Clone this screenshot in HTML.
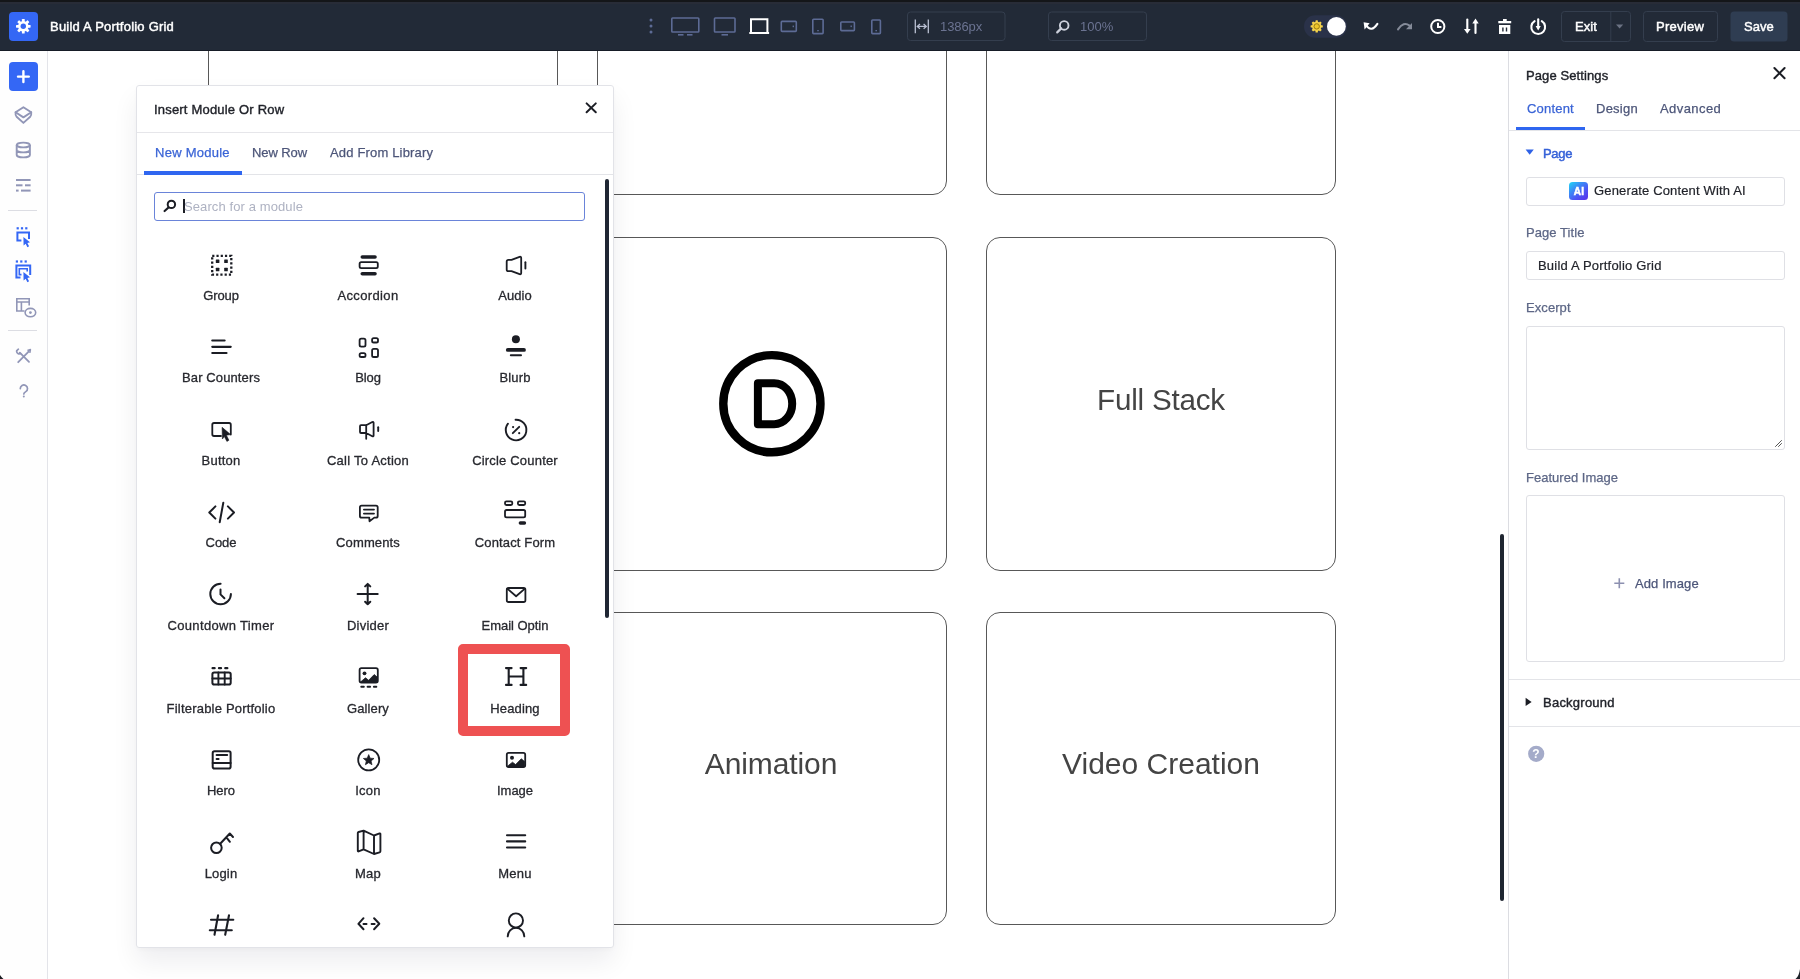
<!DOCTYPE html>
<html><head><meta charset="utf-8">
<style>
*{box-sizing:border-box;margin:0;padding:0}
html,body{width:1800px;height:979px;overflow:hidden;background:#fff;font-family:"Liberation Sans",sans-serif;position:relative}
.abs{position:absolute}
svg{position:absolute;overflow:visible}
.txt{position:absolute;white-space:nowrap;line-height:1;will-change:transform}
</style></head>
<body>
<div class="abs" style="left:208px;top:-30px;width:350px;height:225px;border:1px solid #585858;border-radius:14px;"></div>
<div class="abs" style="left:597px;top:-30px;width:350px;height:225px;border:1px solid #585858;border-radius:14px;"></div>
<div class="abs" style="left:986px;top:-30px;width:350px;height:225px;border:1px solid #585858;border-radius:14px;"></div>
<div class="abs" style="left:208px;top:237px;width:350px;height:334px;border:1px solid #585858;border-radius:14px;"></div>
<div class="abs" style="left:597px;top:237px;width:350px;height:334px;border:1px solid #585858;border-radius:14px;"></div>
<div class="abs" style="left:986px;top:237px;width:350px;height:334px;border:1px solid #585858;border-radius:14px;"></div>
<div class="abs" style="left:208px;top:612px;width:350px;height:313px;border:1px solid #585858;border-radius:14px;"></div>
<div class="abs" style="left:597px;top:612px;width:350px;height:313px;border:1px solid #585858;border-radius:14px;"></div>
<div class="abs" style="left:986px;top:612px;width:350px;height:313px;border:1px solid #585858;border-radius:14px;"></div>
<svg style="left:0;top:0" width="1500" height="979" viewBox="0 0 1500 979"><circle cx="771.9" cy="403.7" r="48.6" fill="none" stroke="#000" stroke-width="8.4"/><path d="M757.9,383.2 H774.2 A18,20.5 0 0 1 774.2,424.2 H757.9 Z" fill="none" stroke="#000" stroke-width="8" stroke-linejoin="round"/><rect x="1500" y="534" width="4" height="367" rx="2" fill="#1f2631"/></svg>
<div class="txt" style="left:1010.80px;width:300px;text-align:center;top:384.54px;font-size:29.6px;font-weight:400;color:#444444;letter-spacing:-0.2px;">Full Stack</div>
<div class="txt" style="left:621.20px;width:300px;text-align:center;top:748.90px;font-size:30px;font-weight:400;color:#444444;letter-spacing:-0.1px;">Animation</div>
<div class="txt" style="left:1010.50px;width:300px;text-align:center;top:748.90px;font-size:30px;font-weight:400;color:#444444;">Video Creation</div>
<div class="abs" style="left:136px;top:85px;width:478px;height:863px;background:#fff;border:1px solid #e2e3e8;border-radius:3px;box-shadow:0 14px 26px rgba(20,20,40,0.07),0 2px 6px rgba(20,20,40,0.03)"></div>
<div class="txt" style="left:154.00px;top:103.00px;font-size:13px;font-weight:400;color:#1f2128;letter-spacing:0.19px;-webkit-text-stroke:0.4px #1f2128;">Insert Module Or Row</div>
<div class="abs" style="left:137px;top:131.5px;width:476px;height:1.0px;background:#e6e6ea;"></div>
<div class="txt" style="left:155.20px;top:146.20px;font-size:13px;font-weight:400;color:#3a64d6;letter-spacing:0.26px;-webkit-text-stroke:0.25px #3a64d6;">New Module</div>
<div class="txt" style="left:252.00px;top:146.20px;font-size:13px;font-weight:400;color:#4d5679;letter-spacing:-0.08px;-webkit-text-stroke:0.25px #4d5679;">New Row</div>
<div class="txt" style="left:329.50px;top:146.20px;font-size:13px;font-weight:400;color:#4d5679;letter-spacing:0.17px;-webkit-text-stroke:0.25px #4d5679;">Add From Library</div>
<div class="abs" style="left:137px;top:173.6px;width:476px;height:1.0px;background:#e3e4e8;"></div>
<div class="abs" style="left:144px;top:171.4px;width:97.5px;height:3.1999999999999886px;background:#2f66f0;"></div>
<div class="abs" style="left:154px;top:191.5px;width:430.5px;height:29px;border:1.5px solid #6a84d9;border-radius:3px"></div>
<div class="abs" style="left:183.2px;top:198.6px;width:1.6000000000000227px;height:14.800000000000011px;background:#1b1d24;"></div>
<div class="txt" style="left:183.80px;top:199.80px;font-size:13px;font-weight:400;color:#aeb2c2;letter-spacing:0.1px;">Search for a module</div>
<div class="abs" style="left:605px;top:179px;width:4px;height:439px;background:#1f2633;border-radius:2px"></div>
<div class="abs" style="left:458px;top:644px;width:112px;height:92px;border:10px solid #ee5152;border-radius:5px"></div>
<svg style="left:0;top:0" width="620" height="979" viewBox="0 0 620 979"><rect x="212.2" y="255.8" width="19.100000000000023" height="18.899999999999977" fill="none" stroke="#1b1d24" stroke-width="2.3" stroke-dasharray="2.2 2.05"/><rect x="215.79999999999998" y="259.5" width="3.6" height="3.6" rx="0.5" fill="#1b1d24"/><rect x="215.79999999999998" y="267.7" width="3.6" height="3.6" rx="0.5" fill="#1b1d24"/><rect x="224.2" y="259.5" width="3.6" height="3.6" rx="0.5" fill="#1b1d24"/><rect x="224.2" y="267.7" width="3.6" height="3.6" rx="0.5" fill="#1b1d24"/><path d="M362.3,257 H375" fill="none" stroke="#1b1d24" stroke-width="3.6" stroke-linecap="round" stroke-linejoin="round"/><rect x="359.6" y="262.1" width="18.2" height="6" rx="1.6" fill="none" stroke="#1b1d24" stroke-width="1.8" stroke-linecap="round" stroke-linejoin="round"/><path d="M362.3,273.7 H375" fill="none" stroke="#1b1d24" stroke-width="3.6" stroke-linecap="round" stroke-linejoin="round"/><path d="M506.7,261.6 Q506.7,259.8 508.5,259.8 L511.5,259.8 L519.6,256.8 Q521.2,256.4 521.2,258.2 L521.2,272.8 Q521.2,274.6 519.6,274.2 L511.5,271.2 L508.5,271.2 Q506.7,271.2 506.7,269.4 Z" fill="none" stroke="#1b1d24" stroke-width="1.8" stroke-linecap="round" stroke-linejoin="round"/><path d="M525.4,262.3 V268.5" fill="none" stroke="#1b1d24" stroke-width="1.9" stroke-linecap="round" stroke-linejoin="round"/><path d="M212.3,340.5 H224.6 M212.3,346.8 H230.7 M212.3,353 H226.5" fill="none" stroke="#1b1d24" stroke-width="2.2" stroke-linecap="round" stroke-linejoin="round"/><rect x="359.6" y="338.6" width="5.9" height="8" rx="1.6" fill="none" stroke="#1b1d24" stroke-width="1.8" stroke-linecap="round" stroke-linejoin="round"/><rect x="372.1" y="338.2" width="5.9" height="4.3" rx="1.6" fill="none" stroke="#1b1d24" stroke-width="1.8" stroke-linecap="round" stroke-linejoin="round"/><rect x="359.6" y="353.2" width="5.9" height="3.8" rx="1.6" fill="none" stroke="#1b1d24" stroke-width="1.8" stroke-linecap="round" stroke-linejoin="round"/><rect x="372.1" y="348.9" width="5.9" height="8.1" rx="1.6" fill="none" stroke="#1b1d24" stroke-width="1.8" stroke-linecap="round" stroke-linejoin="round"/><circle cx="515.9" cy="339.3" r="4" fill="#1b1d24"/><path d="M507.8,349.9 H524" fill="none" stroke="#1b1d24" stroke-width="3.8" stroke-linecap="round" stroke-linejoin="round"/><path d="M510.8,355.2 H521" fill="none" stroke="#1b1d24" stroke-width="2" stroke-linecap="round" stroke-linejoin="round"/><path d="M221,436 H214 Q212.3,436 212.3,434.3 L212.3,424.7 Q212.3,423 214,423 L229.1,423 Q230.8,423 230.8,424.7 L230.8,434.6" fill="none" stroke="#1b1d24" stroke-width="1.8" stroke-linecap="round" stroke-linejoin="round"/><path d="M222.1,427.3 L230.6,434.6 L226.4,435.2 L228.9,440.2 L226.9,441.4 L224.4,436.6 L222.4,439 Z" fill="#1b1d24" stroke="#1b1d24" stroke-width="0.6" stroke-linejoin="round"/><path d="M366.2,425.2 L361,425.2 Q360,425.2 360,426.2 L360,432 Q360,433 361,433 L366.2,433 L372.3,436.2 Q373.6,436.8 373.6,435.4 L373.6,422.8 Q373.6,421.4 372.3,422 Z M366.2,425.2 V433 V438.8" fill="none" stroke="#1b1d24" stroke-width="1.8" stroke-linecap="round" stroke-linejoin="round"/><path d="M378.2,427.3 V431" fill="none" stroke="#1b1d24" stroke-width="1.9" stroke-linecap="round" stroke-linejoin="round"/><path d="M515.56,419.71 A10.3,10.3 0 1 1 507.98,423.66" fill="none" stroke="#1b1d24" stroke-width="1.9" stroke-linecap="round" stroke-linejoin="round"/><path d="M512.8,433.2 L519.2,426.8" fill="none" stroke="#1b1d24" stroke-width="1.9" stroke-linecap="round" stroke-linejoin="round"/><circle cx="513.1" cy="427.1" r="1.1" fill="#1b1d24"/><circle cx="519.2" cy="433.2" r="1.1" fill="#1b1d24"/><path d="M215.4,506.4 L209.3,512.5 L215.4,518.6 M223.3,502.8 L219.7,522.2 M227.9,506.4 L234,512.5 L227.9,518.6" fill="none" stroke="#1b1d24" stroke-width="2" stroke-linecap="round" stroke-linejoin="round"/><path d="M369.3,517.6 L361.6,517.6 Q359.9,517.6 359.9,515.9 L359.9,507.3 Q359.9,505.6 361.6,505.6 L376,505.6 Q377.7,505.6 377.7,507.3 L377.7,515.9 Q377.7,517.6 376,517.6 L374.3,517.6 L369.5,521.3 Z" fill="none" stroke="#1b1d24" stroke-width="1.8" stroke-linecap="round" stroke-linejoin="round"/><path d="M363.9,509.6 H374 M363.9,513.6 H374" fill="none" stroke="#1b1d24" stroke-width="1.8" stroke-linecap="round" stroke-linejoin="round"/><rect x="505" y="501.4" width="7.3" height="3.6" rx="1.4" fill="none" stroke="#1b1d24" stroke-width="1.8" stroke-linecap="round" stroke-linejoin="round"/><rect x="517.9" y="501.4" width="7.3" height="3.6" rx="1.4" fill="none" stroke="#1b1d24" stroke-width="1.8" stroke-linecap="round" stroke-linejoin="round"/><rect x="505" y="510" width="20.2" height="7.4" rx="1.6" fill="none" stroke="#1b1d24" stroke-width="1.8" stroke-linecap="round" stroke-linejoin="round"/><path d="M520.3,523 H524.5" fill="none" stroke="#1b1d24" stroke-width="3.3" stroke-linecap="round" stroke-linejoin="round"/><path d="M220.6,583.7 A10.3,10.3 0 1 0 230.9,594.0" fill="none" stroke="#1b1d24" stroke-width="2" stroke-linecap="round" stroke-linejoin="round"/><path d="M220.5,589.6 V594.4 L224.4,598.2" fill="none" stroke="#1b1d24" stroke-width="2" stroke-linecap="round" stroke-linejoin="round"/><path d="M357.6,594.1 H377.7 M367.7,584 V604.3 M365.1,586.4 L367.7,583.9 L370.3,586.4 M365.1,601.8 L367.7,604.3 L370.3,601.8" fill="none" stroke="#1b1d24" stroke-width="2" stroke-linecap="round" stroke-linejoin="round"/><rect x="506.8" y="588" width="18.6" height="14" rx="1.8" fill="none" stroke="#1b1d24" stroke-width="1.8" stroke-linecap="round" stroke-linejoin="round"/><path d="M507.3,588.6 L516.1,596.2 L524.9,588.6" fill="none" stroke="#1b1d24" stroke-width="1.8" stroke-linecap="round" stroke-linejoin="round"/><path d="M212.6,668.2 H214.6 M219,668.2 H221 M225.3,668.2 H227.3" fill="none" stroke="#1b1d24" stroke-width="2.3" stroke-linecap="round" stroke-linejoin="round"/><rect x="212.4" y="672.4" width="18.3" height="12.2" rx="1.8" fill="none" stroke="#1b1d24" stroke-width="2" stroke-linecap="round" stroke-linejoin="round"/><path d="M218.4,672.4 V684.6 M224.7,672.4 V684.6 M212.4,678.5 H230.7" fill="none" stroke="#1b1d24" stroke-width="1.9" stroke-linecap="round" stroke-linejoin="round"/><rect x="359.6" y="668.2" width="18.2" height="14.3" rx="1.8" fill="none" stroke="#1b1d24" stroke-width="1.8" stroke-linecap="round" stroke-linejoin="round"/><circle cx="364.5" cy="673.3" r="1.9" fill="#1b1d24"/><path d="M360.5,682 L365.5,677.8 L368.6,680.3 L374.2,674.6 L377.5,677.3 L377.5,682.5 L360.5,682.5 Z" fill="#1b1d24" stroke="#1b1d24" stroke-width="0.8" stroke-linejoin="round"/><path d="M361.3,686.8 H363.8 M367.6,686.8 H370.1 M373.9,686.8 H376.3" fill="none" stroke="#1b1d24" stroke-width="2" stroke-linecap="round" stroke-linejoin="round"/><rect x="212.7" y="751.2" width="17.9" height="17.3" rx="1.8" fill="none" stroke="#1b1d24" stroke-width="2" stroke-linecap="round" stroke-linejoin="round"/><path d="M216.6,754.9 H227.2 M216.6,759 H218.6" fill="none" stroke="#1b1d24" stroke-width="2" stroke-linecap="round" stroke-linejoin="round"/><path d="M212.7,763.1 H230.6" fill="none" stroke="#1b1d24" stroke-width="2" stroke-linecap="round" stroke-linejoin="round"/><circle cx="368.7" cy="759.9" r="10.5" fill="none" stroke="#1b1d24" stroke-width="1.8" stroke-linecap="round" stroke-linejoin="round"/><path d="M368.70,754.60 L370.17,758.18 L374.03,758.47 L371.08,760.97 L371.99,764.73 L368.70,762.70 L365.41,764.73 L366.32,760.97 L363.37,758.47 L367.23,758.18 Z" fill="#1b1d24" stroke="#1b1d24" stroke-width="0.7" stroke-linejoin="round"/><rect x="506.8" y="752.9" width="18.4" height="14.1" rx="1.8" fill="none" stroke="#1b1d24" stroke-width="1.8" stroke-linecap="round" stroke-linejoin="round"/><circle cx="512" cy="757.8" r="2" fill="#1b1d24"/><path d="M507.5,766.2 L512.5,762.2 L515.6,764.6 L521.3,758.8 L524.6,761.6 L524.6,766.6 L507.5,766.6 Z" fill="#1b1d24" stroke="#1b1d24" stroke-width="0.8" stroke-linejoin="round"/><circle cx="216.4" cy="847.7" r="5.3" fill="none" stroke="#1b1d24" stroke-width="2" stroke-linecap="round" stroke-linejoin="round"/><path d="M220.2,843.8 L229.8,833.5 L233,837 M226.4,837.4 L229.9,841.8" fill="none" stroke="#1b1d24" stroke-width="2" stroke-linecap="round" stroke-linejoin="round"/><path d="M357.8,833 Q357.8,832.2 358.6,832 L363.6,830.7 L374,835.5 L379.6,833.4 Q380.4,833.2 380.4,834 L380.4,851.3 Q380.4,852.1 379.6,852.3 L374,854 L363.6,849.4 L358.6,851.4 Q357.8,851.6 357.8,850.8 Z M363.6,830.7 V849.4 M374,835.5 V854" fill="none" stroke="#1b1d24" stroke-width="1.9" stroke-linecap="round" stroke-linejoin="round"/><path d="M507,835.2 H525.2 M507,841.4 H525.2 M507,847.5 H525.2" fill="none" stroke="#1b1d24" stroke-width="2.1" stroke-linecap="round" stroke-linejoin="round"/><path d="M211,919.7 H233.3 M209.8,930.2 H231.8 M218.1,915.3 L214.5,934.8 M229,915.3 L225.2,934.8" fill="none" stroke="#1b1d24" stroke-width="2.1" stroke-linecap="round" stroke-linejoin="round"/><path d="M363.5,918.2 L358.4,923.8 L363.5,929.2 M374.1,918.2 L379.3,923.8 L374.1,929.2 M363.5,923.9 H366.5 M371.6,923.9 H374.6" fill="none" stroke="#1b1d24" stroke-width="2" stroke-linecap="round" stroke-linejoin="round"/><circle cx="515.9" cy="920.5" r="7.1" fill="none" stroke="#1b1d24" stroke-width="1.9" stroke-linecap="round" stroke-linejoin="round"/><path d="M507.7,936.4 A8.3,8.6 0 0 1 524.3,936.4" fill="none" stroke="#1b1d24" stroke-width="1.9" stroke-linecap="round" stroke-linejoin="round"/><path d="M508.7,668 V685 M523.4,668 V685 M508.7,676.5 H523.4" stroke="#1b1d24" stroke-width="2.1" fill="none"/><path d="M506,668.1 H511.6 M520.6,668.1 H526.2 M506,684.9 H511.6 M520.6,684.9 H526.2" stroke="#1b1d24" stroke-width="2.1" stroke-linecap="round" fill="none"/><circle cx="171.4" cy="204.4" r="3.7" fill="none" stroke="#1b1d24" stroke-width="2"/><path d="M168.5,207.5 L164.6,211" stroke="#1b1d24" stroke-width="2.2" stroke-linecap="round"/><path d="M586.6,103.4 L595.8,112.3 M595.8,103.4 L586.6,112.3" stroke="#1b1d24" stroke-width="2" stroke-linecap="round"/></svg>
<div class="txt" style="left:151.10px;width:140px;text-align:center;top:288.60px;font-size:13px;font-weight:400;color:#28292f;letter-spacing:-0.09px;-webkit-text-stroke:0.3px #28292f;">Group</div>
<div class="txt" style="left:298.35px;width:140px;text-align:center;top:288.60px;font-size:13px;font-weight:400;color:#28292f;letter-spacing:0.37px;-webkit-text-stroke:0.3px #28292f;">Accordion</div>
<div class="txt" style="left:445.40px;width:140px;text-align:center;top:288.60px;font-size:13px;font-weight:400;color:#28292f;letter-spacing:0.09px;-webkit-text-stroke:0.3px #28292f;">Audio</div>
<div class="txt" style="left:151.10px;width:140px;text-align:center;top:371.20px;font-size:13px;font-weight:400;color:#28292f;letter-spacing:0.12px;-webkit-text-stroke:0.3px #28292f;">Bar Counters</div>
<div class="txt" style="left:298.35px;width:140px;text-align:center;top:371.20px;font-size:13px;font-weight:400;color:#28292f;letter-spacing:-0.08px;-webkit-text-stroke:0.3px #28292f;">Blog</div>
<div class="txt" style="left:445.40px;width:140px;text-align:center;top:371.20px;font-size:13px;font-weight:400;color:#28292f;letter-spacing:0.14px;-webkit-text-stroke:0.3px #28292f;">Blurb</div>
<div class="txt" style="left:151.10px;width:140px;text-align:center;top:453.80px;font-size:13px;font-weight:400;color:#28292f;letter-spacing:0.2px;-webkit-text-stroke:0.3px #28292f;">Button</div>
<div class="txt" style="left:298.35px;width:140px;text-align:center;top:453.80px;font-size:13px;font-weight:400;color:#28292f;letter-spacing:0.25px;-webkit-text-stroke:0.3px #28292f;">Call To Action</div>
<div class="txt" style="left:445.40px;width:140px;text-align:center;top:453.80px;font-size:13px;font-weight:400;color:#28292f;letter-spacing:0.19px;-webkit-text-stroke:0.3px #28292f;">Circle Counter</div>
<div class="txt" style="left:151.10px;width:140px;text-align:center;top:536.40px;font-size:13px;font-weight:400;color:#28292f;letter-spacing:-0.06px;-webkit-text-stroke:0.3px #28292f;">Code</div>
<div class="txt" style="left:298.35px;width:140px;text-align:center;top:536.40px;font-size:13px;font-weight:400;color:#28292f;letter-spacing:0.12px;-webkit-text-stroke:0.3px #28292f;">Comments</div>
<div class="txt" style="left:445.40px;width:140px;text-align:center;top:536.40px;font-size:13px;font-weight:400;color:#28292f;letter-spacing:0.14px;-webkit-text-stroke:0.3px #28292f;">Contact Form</div>
<div class="txt" style="left:151.10px;width:140px;text-align:center;top:619.00px;font-size:13px;font-weight:400;color:#28292f;letter-spacing:0.34px;-webkit-text-stroke:0.3px #28292f;">Countdown Timer</div>
<div class="txt" style="left:298.35px;width:140px;text-align:center;top:619.00px;font-size:13px;font-weight:400;color:#28292f;letter-spacing:0.22px;-webkit-text-stroke:0.3px #28292f;">Divider</div>
<div class="txt" style="left:445.40px;width:140px;text-align:center;top:619.00px;font-size:13px;font-weight:400;color:#28292f;letter-spacing:-0.03px;-webkit-text-stroke:0.3px #28292f;">Email Optin</div>
<div class="txt" style="left:151.10px;width:140px;text-align:center;top:701.60px;font-size:13px;font-weight:400;color:#28292f;letter-spacing:0.2px;-webkit-text-stroke:0.3px #28292f;">Filterable Portfolio</div>
<div class="txt" style="left:298.35px;width:140px;text-align:center;top:701.60px;font-size:13px;font-weight:400;color:#28292f;letter-spacing:0.1px;-webkit-text-stroke:0.3px #28292f;">Gallery</div>
<div class="txt" style="left:445.40px;width:140px;text-align:center;top:701.60px;font-size:13px;font-weight:400;color:#28292f;letter-spacing:0.14px;-webkit-text-stroke:0.3px #28292f;">Heading</div>
<div class="txt" style="left:151.10px;width:140px;text-align:center;top:784.20px;font-size:13px;font-weight:400;color:#28292f;letter-spacing:-0.06px;-webkit-text-stroke:0.3px #28292f;">Hero</div>
<div class="txt" style="left:298.35px;width:140px;text-align:center;top:784.20px;font-size:13px;font-weight:400;color:#28292f;letter-spacing:0.24px;-webkit-text-stroke:0.3px #28292f;">Icon</div>
<div class="txt" style="left:445.40px;width:140px;text-align:center;top:784.20px;font-size:13px;font-weight:400;color:#28292f;letter-spacing:-0.04px;-webkit-text-stroke:0.3px #28292f;">Image</div>
<div class="txt" style="left:151.10px;width:140px;text-align:center;top:866.80px;font-size:13px;font-weight:400;color:#28292f;letter-spacing:0.17px;-webkit-text-stroke:0.3px #28292f;">Login</div>
<div class="txt" style="left:298.35px;width:140px;text-align:center;top:866.80px;font-size:13px;font-weight:400;color:#28292f;letter-spacing:0.25px;-webkit-text-stroke:0.3px #28292f;">Map</div>
<div class="txt" style="left:445.40px;width:140px;text-align:center;top:866.80px;font-size:13px;font-weight:400;color:#28292f;letter-spacing:0.26px;-webkit-text-stroke:0.3px #28292f;">Menu</div>
<div class="abs" style="left:1508px;top:51px;width:292px;height:928px;background:#fff;"></div>
<div class="abs" style="left:1508px;top:51px;width:1px;height:928px;background:#dcdde2;"></div>
<div class="txt" style="left:1526.20px;top:69.00px;font-size:13px;font-weight:400;color:#1f2128;letter-spacing:0.1px;-webkit-text-stroke:0.4px #1f2128;">Page Settings</div>
<div class="txt" style="left:1527.40px;top:102.20px;font-size:13px;font-weight:400;color:#3a64d6;letter-spacing:0.2px;-webkit-text-stroke:0.25px #3a64d6;">Content</div>
<div class="txt" style="left:1596.30px;top:102.20px;font-size:13px;font-weight:400;color:#4d5679;letter-spacing:0.25px;-webkit-text-stroke:0.25px #4d5679;">Design</div>
<div class="txt" style="left:1659.50px;top:102.20px;font-size:13px;font-weight:400;color:#4d5679;letter-spacing:0.42px;-webkit-text-stroke:0.25px #4d5679;">Advanced</div>
<div class="abs" style="left:1509px;top:129.5px;width:291px;height:1.0px;background:#e3e4e8;"></div>
<div class="abs" style="left:1516.3px;top:127.4px;width:69.20000000000005px;height:3.0999999999999943px;background:#2f66f0;"></div>
<div class="txt" style="left:1543.00px;top:147.00px;font-size:13px;font-weight:400;color:#3561d8;letter-spacing:-0.3px;-webkit-text-stroke:0.45px #3561d8;">Page</div>
<div class="abs" style="left:1526px;top:177px;width:258.5px;height:28.5px;border:1px solid #dfe0e5;border-radius:3px;background:#fff"></div>
<div class="abs" style="left:1569.3px;top:182px;width:18.8px;height:18.4px;border-radius:3.5px;background:linear-gradient(140deg,#20d8f6 0%,#3b8af5 35%,#4d55f5 65%,#5a2ee8 100%)"></div>
<div class="txt" style="left:1568.90px;width:20px;text-align:center;top:186.53px;font-size:10px;font-weight:700;color:#fff;letter-spacing:0.2px;-webkit-text-stroke:0.5px #fff;">AI</div>
<div class="txt" style="left:1593.60px;top:184.40px;font-size:13px;font-weight:400;color:#22242b;letter-spacing:0.15px;-webkit-text-stroke:0.2px #22242b;">Generate Content With AI</div>
<div class="txt" style="left:1526.00px;top:226.30px;font-size:13px;font-weight:400;color:#5d6786;letter-spacing:0.07px;-webkit-text-stroke:0.25px #5d6786;">Page Title</div>
<div class="abs" style="left:1526px;top:251px;width:258.5px;height:28.5px;border:1px solid #dfe0e5;border-radius:3px;background:#fff"></div>
<div class="txt" style="left:1537.60px;top:259.20px;font-size:13px;font-weight:400;color:#22242b;letter-spacing:0.2px;-webkit-text-stroke:0.2px #22242b;">Build A Portfolio Grid</div>
<div class="txt" style="left:1526.00px;top:300.60px;font-size:13px;font-weight:400;color:#5d6786;letter-spacing:0.07px;-webkit-text-stroke:0.25px #5d6786;">Excerpt</div>
<div class="abs" style="left:1526px;top:325.5px;width:258.5px;height:124px;border:1px solid #dfe0e5;border-radius:3px;background:#fff"></div>
<div class="txt" style="left:1526.00px;top:470.60px;font-size:13px;font-weight:400;color:#5d6786;letter-spacing:0.02px;-webkit-text-stroke:0.25px #5d6786;">Featured Image</div>
<div class="abs" style="left:1526px;top:495px;width:258.5px;height:167px;border:1px solid #dfe0e5;border-radius:3px;background:#fff"></div>
<div class="txt" style="left:1635.00px;top:576.80px;font-size:13px;font-weight:400;color:#4d5679;letter-spacing:0.1px;-webkit-text-stroke:0.25px #4d5679;">Add Image</div>
<div class="abs" style="left:1509px;top:678.5px;width:291px;height:1.0px;background:#e3e4e8;"></div>
<div class="txt" style="left:1543.00px;top:695.60px;font-size:13px;font-weight:400;color:#22242b;letter-spacing:0.24px;-webkit-text-stroke:0.4px #22242b;">Background</div>
<div class="abs" style="left:1509px;top:725.5px;width:291px;height:1.0px;background:#e3e4e8;"></div>
<svg style="left:0;top:0" width="1800" height="979" viewBox="0 0 1800 979"><path d="M1774.4,68 L1784.6,78.3 M1784.6,68 L1774.4,78.3" stroke="#1b1d24" stroke-width="2" stroke-linecap="round"/><path d="M1525.6,149.6 H1533.8 L1529.7,154.8 Z" fill="#2f62e6"/><path d="M1775.5,446.5 L1781.5,440.5 M1778.5,446.5 L1781.5,443.5" stroke="#555" stroke-width="1" stroke-linecap="round"/><path d="M1619.3,578.3 V588.3 M1614.3,583.3 H1624.3" stroke="#8c90b0" stroke-width="1.6"/><path d="M1525.6,697.8 L1531.6,701.9 L1525.6,706 Z" fill="#1b1d24"/><circle cx="1536.2" cy="753.8" r="8.1" fill="#a4abc9"/></svg>
<div class="txt" style="left:1526.40px;width:20px;text-align:center;top:748.14px;font-size:12px;font-weight:700;color:#fff;">?</div>
<div class="abs" style="left:0px;top:2px;width:1800px;height:49px;background:#222a37;"></div>
<div class="abs" style="left:0px;top:0px;width:1800px;height:1.6px;background:#141619;"></div>
<div class="abs" style="left:0px;top:1.6px;width:1800px;height:2.9px;background:#282c37;"></div>
<div class="abs" style="left:0px;top:50px;width:1800px;height:1px;background:#161c26;"></div>
<svg style="left:0;top:0" width="1800" height="51" viewBox="0 0 1800 51"><rect x="9" y="12" width="29" height="29" rx="4" fill="#3467f5"/><circle cx="23.3" cy="26.3" r="5.2" fill="#fff"/><rect x="21.900000000000002" y="19.0" width="2.8" height="7.3" rx="0.6" fill="#fff" transform="rotate(0.0 23.3 26.3)"/><rect x="21.900000000000002" y="19.0" width="2.8" height="7.3" rx="0.6" fill="#fff" transform="rotate(45.0 23.3 26.3)"/><rect x="21.900000000000002" y="19.0" width="2.8" height="7.3" rx="0.6" fill="#fff" transform="rotate(90.0 23.3 26.3)"/><rect x="21.900000000000002" y="19.0" width="2.8" height="7.3" rx="0.6" fill="#fff" transform="rotate(135.0 23.3 26.3)"/><rect x="21.900000000000002" y="19.0" width="2.8" height="7.3" rx="0.6" fill="#fff" transform="rotate(180.0 23.3 26.3)"/><rect x="21.900000000000002" y="19.0" width="2.8" height="7.3" rx="0.6" fill="#fff" transform="rotate(225.0 23.3 26.3)"/><rect x="21.900000000000002" y="19.0" width="2.8" height="7.3" rx="0.6" fill="#fff" transform="rotate(270.0 23.3 26.3)"/><rect x="21.900000000000002" y="19.0" width="2.8" height="7.3" rx="0.6" fill="#fff" transform="rotate(315.0 23.3 26.3)"/><circle cx="23.3" cy="26.3" r="2.7" fill="#3467f5"/><circle cx="651" cy="20" r="1.5" fill="#5d6b95"/><circle cx="651" cy="26" r="1.5" fill="#5d6b95"/><circle cx="651" cy="32" r="1.5" fill="#5d6b95"/><rect x="671.8" y="18" width="27" height="14" rx="0.8" fill="none" stroke="#5d6b95" stroke-width="1.6"/><rect x="678" y="34" width="5.5" height="1.6" fill="#5d6b95"/><rect x="687" y="34" width="5.5" height="1.6" fill="#5d6b95"/><rect x="714.5" y="18" width="20.5" height="14" rx="0.8" fill="none" stroke="#5d6b95" stroke-width="1.6"/><rect x="721.5" y="34" width="6.5" height="1.6" fill="#5d6b95"/><path d="M751,33 V19.3 H767.4 V33" fill="none" stroke="#fff" stroke-width="2"/><rect x="749.3" y="32" width="19.8" height="2" fill="#fff"/><rect x="781.3" y="21.4" width="15" height="10" rx="0.8" fill="none" stroke="#5d6b95" stroke-width="1.6"/><rect x="792.6" y="25.6" width="1.4" height="1.6" fill="#5d6b95"/><rect x="812.8" y="19.2" width="10.3" height="14.4" rx="0.8" fill="none" stroke="#5d6b95" stroke-width="1.6"/><rect x="817.2" y="30" width="1.6" height="1.3" fill="#5d6b95"/><rect x="840.8" y="22" width="13.6" height="8.6" rx="0.8" fill="none" stroke="#5d6b95" stroke-width="1.6"/><rect x="850.5" y="25.5" width="1.4" height="1.6" fill="#5d6b95"/><rect x="871.8" y="20" width="8.6" height="13.6" rx="0.8" fill="none" stroke="#5d6b95" stroke-width="1.6"/><rect x="875.4" y="30" width="1.6" height="1.3" fill="#5d6b95"/><rect x="907.5" y="12" width="97.5" height="28.5" rx="3" fill="none" stroke="#343e4e" stroke-width="1"/><path d="M915.3,19.5 V33.2 M928.3,19.5 V33.2 M917.8,26.4 H925.8" stroke="#b9bfd2" stroke-width="1.3" fill="none"/><path d="M920,24 L917.3,26.4 L920,28.8 M923.6,24 L926.3,26.4 L923.6,28.8" stroke="#b9bfd2" stroke-width="1.3" fill="none"/><rect x="1048.5" y="12" width="98" height="28.5" rx="3" fill="none" stroke="#343e4e" stroke-width="1"/><circle cx="1064.2" cy="25.4" r="4.3" fill="none" stroke="#cdd1dc" stroke-width="1.9"/><path d="M1061.2,28.4 L1057.2,32.4" stroke="#cdd1dc" stroke-width="2.2" stroke-linecap="round"/><rect x="1304" y="15.3" width="43" height="22.4" rx="11.2" fill="#2a3249"/><circle cx="1316.7" cy="26.4" r="4.7" fill="#f4d24a"/><rect x="1315.5" y="20.299999999999997" width="2.4" height="6.1" rx="0.6" fill="#f4d24a" transform="rotate(0.0 1316.7 26.4)"/><rect x="1315.5" y="20.299999999999997" width="2.4" height="6.1" rx="0.6" fill="#f4d24a" transform="rotate(45.0 1316.7 26.4)"/><rect x="1315.5" y="20.299999999999997" width="2.4" height="6.1" rx="0.6" fill="#f4d24a" transform="rotate(90.0 1316.7 26.4)"/><rect x="1315.5" y="20.299999999999997" width="2.4" height="6.1" rx="0.6" fill="#f4d24a" transform="rotate(135.0 1316.7 26.4)"/><rect x="1315.5" y="20.299999999999997" width="2.4" height="6.1" rx="0.6" fill="#f4d24a" transform="rotate(180.0 1316.7 26.4)"/><rect x="1315.5" y="20.299999999999997" width="2.4" height="6.1" rx="0.6" fill="#f4d24a" transform="rotate(225.0 1316.7 26.4)"/><rect x="1315.5" y="20.299999999999997" width="2.4" height="6.1" rx="0.6" fill="#f4d24a" transform="rotate(270.0 1316.7 26.4)"/><rect x="1315.5" y="20.299999999999997" width="2.4" height="6.1" rx="0.6" fill="#f4d24a" transform="rotate(315.0 1316.7 26.4)"/><circle cx="1316.7" cy="26.4" r="2.6" fill="#f4d24a"/><circle cx="1316.7" cy="26.4" r="2.7" fill="#eec72a" stroke="#9c7c12" stroke-width="1"/><circle cx="1336.4" cy="26.4" r="9.4" fill="#fff"/><path d="M1366.2,25.2 Q1371.2,33 1377.4,23.8" fill="none" stroke="#fff" stroke-width="2.1" stroke-linecap="round"/><path d="M1363.6,22.2 L1369.6,23.3 L1364.6,29.4 Z" fill="#fff"/><path d="M1398,29.4 Q1403.5,21 1409.5,25.6" fill="none" stroke="#858b99" stroke-width="2" stroke-linecap="round"/><path d="M1412,23 L1412,29.3 L1406,29.3 Z" fill="#858b99"/><circle cx="1437.8" cy="26.5" r="6.6" fill="none" stroke="#fff" stroke-width="2"/><path d="M1438,22.8 V27 H1441.4" fill="none" stroke="#fff" stroke-width="2"/><path d="M1467.3,19.5 V30" stroke="#fff" stroke-width="2.1" stroke-linecap="round"/><path d="M1464,29 H1470.6 L1467.3,33.8 Z" fill="#fff"/><path d="M1475.5,22.5 V33" stroke="#fff" stroke-width="2.1" stroke-linecap="round"/><path d="M1472.3,23.5 H1478.7 L1475.5,18.5 Z" fill="#fff"/><rect x="1503" y="19" width="3.7" height="2.5" fill="#fff"/><rect x="1498.3" y="21" width="12.9" height="2.3" fill="#fff"/><path d="M1499,25 H1510.3 V34 H1499 Z M1502.2,27.5 V31.6 H1503.6 V27.5 Z M1505.8,27.5 V31.6 H1507.2 V27.5 Z" fill="#fff" fill-rule="evenodd"/><path d="M1534.6,21.2 A6.9,6.9 0 1 0 1541.8,21.2" fill="none" stroke="#fff" stroke-width="2.1" stroke-linecap="round"/><path d="M1538.2,19.2 V27" stroke="#fff" stroke-width="2.1" stroke-linecap="round"/><path d="M1535.6,26 H1540.8 L1538.2,30.6 Z" fill="#fff"/><rect x="1561.5" y="11.5" width="69" height="30" rx="3" fill="none" stroke="#343e4e" stroke-width="1"/><path d="M1610.8,12 V41" stroke="#343e4e" stroke-width="1"/><path d="M1616,24.5 H1623.2 L1619.6,28.5 Z" fill="#6b7283"/><rect x="1643.5" y="11.5" width="74" height="30" rx="3" fill="none" stroke="#343e4e" stroke-width="1"/><rect x="1730.5" y="11.5" width="57" height="30" rx="3.5" fill="#2f3d52"/></svg>
<div class="txt" style="left:50.00px;top:20.00px;font-size:13px;font-weight:400;color:#fff;letter-spacing:0.22px;-webkit-text-stroke:0.45px #fff;">Build A Portfolio Grid</div>
<div class="txt" style="left:939.70px;top:20.00px;font-size:13px;font-weight:400;color:#6b7391;letter-spacing:-0.1px;">1386px</div>
<div class="txt" style="left:1080.00px;top:20.00px;font-size:13px;font-weight:400;color:#6b7391;">100%</div>
<div class="txt" style="left:1574.70px;top:20.00px;font-size:13px;font-weight:400;color:#fff;letter-spacing:0.04px;-webkit-text-stroke:0.45px #fff;">Exit</div>
<div class="txt" style="left:1656.40px;top:20.00px;font-size:13px;font-weight:400;color:#fff;letter-spacing:0.28px;-webkit-text-stroke:0.45px #fff;">Preview</div>
<div class="txt" style="left:1744.40px;top:20.00px;font-size:13px;font-weight:400;color:#fff;-webkit-text-stroke:0.45px #fff;">Save</div>
<div class="abs" style="left:0px;top:51px;width:47px;height:928px;background:#fefefe;"></div>
<div class="abs" style="left:47px;top:51px;width:1px;height:928px;background:#e3e4e9;"></div>
<svg style="left:0;top:0" width="1800" height="979" viewBox="0 0 1800 979"><path d="M0,975 Q1.5,977.5 3.5,979 L0,979 Z" fill="#1a1d22"/><path d="M1800,969 Q1799,976.5 1795.5,979 L1800,979 Z" fill="#1d2229"/></svg>
<svg style="left:0;top:0" width="48" height="420" viewBox="0 0 48 420"><rect x="9" y="62" width="29" height="29" rx="4" fill="#3467f5"/><path d="M23.4,71.2 V82 M18,76.6 H28.8" stroke="#fff" stroke-width="2.4" stroke-linecap="round"/><path d="M23.4,107.2 L31.2,112.3 L23.4,117.4 L15.6,112.3 Z" fill="none" stroke="#9196b7" stroke-width="1.9" stroke-linejoin="round"/><path d="M15.6,112.3 Q15.2,115.6 16.6,116.8 L23.4,122.9 L30.2,116.8 Q31.6,115.6 31.2,112.3" fill="none" stroke="#9196b7" stroke-width="1.9" stroke-linejoin="round" stroke-linecap="round"/><ellipse cx="23.3" cy="145" rx="6.6" ry="2.4" fill="none" stroke="#9196b7" stroke-width="1.9"/><path d="M16.7,145 V155 A6.6,2.4 0 0 0 29.9,155 V145 M16.7,150 A6.6,2.4 0 0 0 29.9,150" fill="none" stroke="#9196b7" stroke-width="1.9"/><rect x="16" y="179" width="14.6" height="2" fill="#9196b7"/><rect x="16" y="184.3" width="6.5" height="2" fill="#9196b7"/><rect x="25" y="184.3" width="5.6" height="2" fill="#9196b7"/><rect x="16" y="189.6" width="2.6" height="2" fill="#9196b7"/><rect x="21" y="189.6" width="9.6" height="2" fill="#9196b7"/><rect x="8" y="210" width="29" height="1" fill="#dcdde3"/><rect x="16.6" y="227.2" width="2.2" height="2.2" fill="#3467f5"/><rect x="20.9" y="227.2" width="2.2" height="2.2" fill="#3467f5"/><rect x="25.2" y="227.2" width="2.2" height="2.2" fill="#3467f5"/><path d="M21.4,240.6 H17.4 V232.6 H29 V239" fill="none" stroke="#3467f5" stroke-width="2"/><path d="M23.4,237 L30,242.2 L27.4,242.9 L29.1,246.3 L27.4,247.2 L25.7,243.8 L23.6,245.6 Z" fill="#3467f5"/><rect x="15.8" y="260.4" width="2.2" height="2.2" fill="#3467f5"/><rect x="20.2" y="260.4" width="2.2" height="2.2" fill="#3467f5"/><rect x="24.6" y="260.4" width="2.2" height="2.2" fill="#3467f5"/><path d="M20.5,277.6 H16.4 V265.4 H30.2 V275" fill="none" stroke="#3467f5" stroke-width="2"/><path d="M21.5,274.6 H19.3 V268.8 H27.2 V271.5" fill="none" stroke="#3467f5" stroke-width="1.6"/><path d="M23.4,272 L30,277.2 L27.4,277.9 L29.1,281.3 L27.4,282.2 L25.7,278.8 L23.6,280.6 Z" fill="#3467f5"/><path d="M24.5,311 H16.8 V298.8 H29.2 V305.5 M16.8,302 H29.2 M21.4,302 V311" fill="none" stroke="#9196b7" stroke-width="1.6"/><ellipse cx="30.4" cy="312.6" rx="5.3" ry="4.2" fill="#fefefe" stroke="#9196b7" stroke-width="1.6"/><circle cx="30.4" cy="312.6" r="1.4" fill="#9196b7"/><rect x="8" y="330" width="29" height="1" fill="#dcdde3"/><path d="M18.2,362.2 L28.6,351.6" stroke="#9196b7" stroke-width="1.8" stroke-linecap="round"/><path d="M27.4,350.4 L30.4,349.6 L29.8,352.8" fill="none" stroke="#9196b7" stroke-width="1.6" stroke-linejoin="round"/><path d="M19.8,352.6 L29,361.8" stroke="#9196b7" stroke-width="1.8" stroke-linecap="round"/><path d="M16.6,351.2 A2.8,2.8 0 0 0 20.6,353.6" fill="none" stroke="#9196b7" stroke-width="1.7" stroke-linecap="round"/><path d="M16.8,350.6 L18.4,349.2" stroke="#9196b7" stroke-width="1.7" stroke-linecap="round"/><path d="M20.3,388.6 A3.6,3.6 0 1 1 25.8,391.6 Q23.8,392.8 23.8,394" fill="none" stroke="#9196b7" stroke-width="1.7" stroke-linecap="round"/><circle cx="23.8" cy="396.6" r="1" fill="#9196b7"/></svg>
</body></html>
